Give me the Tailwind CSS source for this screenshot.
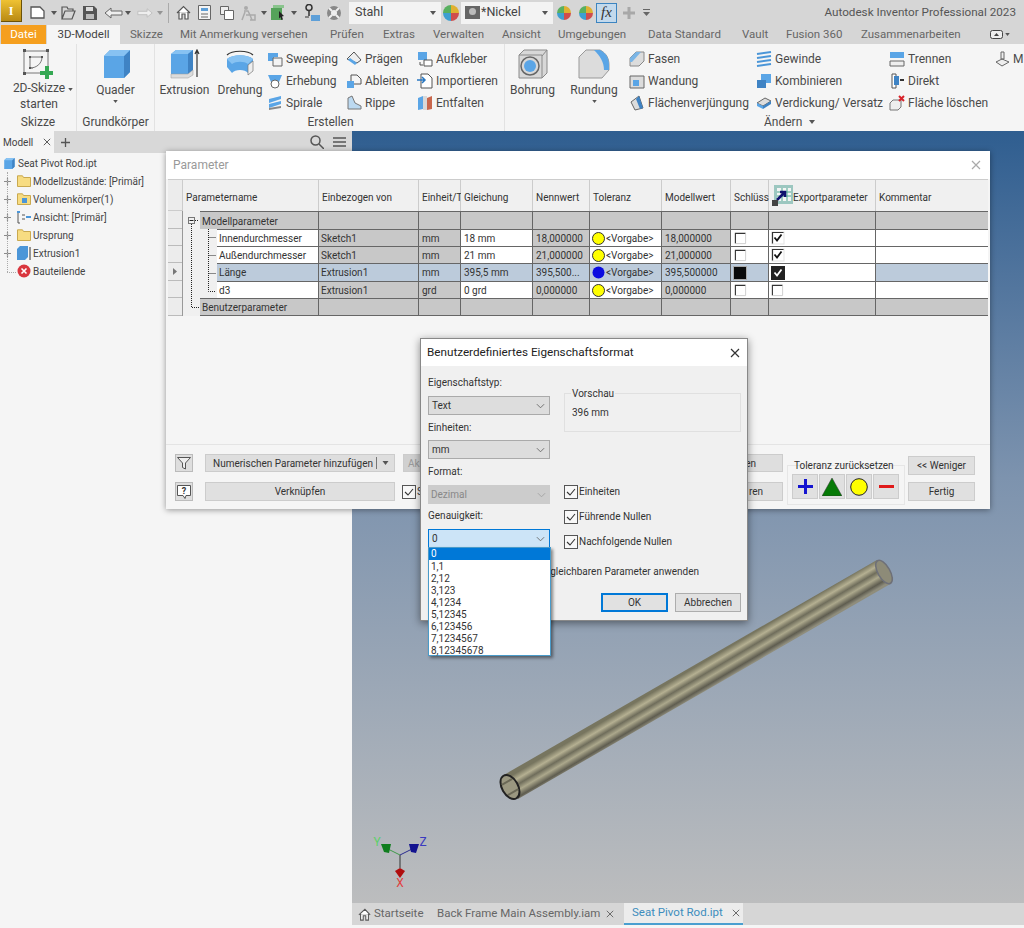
<!DOCTYPE html>
<html lang="de">
<head>
<meta charset="utf-8">
<title>Autodesk Inventor Professional 2023</title>
<script src="https://cdn.jsdelivr.net/npm/@tailwindcss/browser@4"></script>
</head>
<body class="m-0">
<svg class="hidden" width="0" height="0">
  <defs>
    <symbol id="cube" viewBox="0 0 30 30"><path d="M3 7 9 1h20v22l-6 6H3z" fill="#5aa5e6"/><path d="M23 7 29 1v22l-6 6z" fill="#3f83c4"/><path d="M3 7 9 1h20l-6 6z" fill="#87c2f2"/></symbol>
    <symbol id="folder" viewBox="0 0 14 12"><path d="M.5 11.5V.8h5l1 1.7h7v9z" fill="#f7dc82" stroke="#c9a94f"/></symbol>
    <symbol id="plus" viewBox="0 0 7 7"><path d="M3.500 0v7M0 3.500h7" stroke="#8a8a8a" stroke-width="1.200"/></symbol>
    <symbol id="chev" viewBox="0 0 10 6"><path d="M1 1l4 4 4-4" fill="none" stroke="#666" stroke-width="1"/></symbol>
    <symbol id="caret" viewBox="0 0 6 4"><path d="M0 0h6L3 4z" fill="#555"/></symbol>
    <symbol id="wheel" viewBox="0 0 16 16"><path d="M8 8V0a8 8 0 0 1 8 8z" fill="#e0b030"/><path d="M8 8h8a8 8 0 0 1-8 8z" fill="#cf4d4d"/><path d="M8 8v8a8 8 0 0 1-8-8z" fill="#3d9fd0"/><path d="M8 8H0a8 8 0 0 1 8-8z" fill="#58b060"/></symbol>
    <symbol id="check" viewBox="0 0 14 14"><rect x=".5" y=".5" width="13" height="13" fill="#f8f8f8" stroke="#555"/><path d="M3 7l3 3 5-6" fill="none" stroke="#333" stroke-width="1.100"/></symbol>
    <symbol id="cbox" viewBox="0 0 14 14"><rect x="1.500" y="1.500" width="11" height="11" fill="#fff"/><path d="M1.500 12.500v-11h11" fill="none" stroke="#333" stroke-width="1.200"/><path d="M12.500 1.500v11h-11" fill="none" stroke="#ccc"/></symbol>
    <symbol id="cboxc" viewBox="0 0 14 14"><rect x=".5" y=".5" width="13" height="13" fill="#e3e3e3"/><rect x="1.500" y="1.500" width="11" height="11" fill="#fff"/><path d="M1.500 12.500v-11h11" fill="none" stroke="#333" stroke-width="1.200"/><path d="M3.500 6.500l2.500 3 4.500-6" fill="none" stroke="#111" stroke-width="1.800"/></symbol>
    <symbol id="x" viewBox="0 0 10 10"><path d="M1 1l8 8M9 1l-8 8" stroke="currentColor" stroke-width="1.200"/></symbol>
  </defs>
</svg>

<div class="relative w-[1024px] h-[928px] overflow-hidden flex flex-col bg-[#f5f5f5] text-[#444] text-[12px] font-['Roboto',sans-serif]">

  <!-- Quick access bar -->
  <div class="h-[25px] shrink-0 bg-[#d6d6d6] flex items-center relative">
    <div class="w-[21px] h-[22px] ml-px -mt-[3px] bg-gradient-to-b from-[#efc233] to-[#b98a12] flex items-center justify-center text-white text-[12px] font-bold font-['Liberation_Serif',serif] border-r border-b border-[#6b5208]">I</div>
    <svg class="ml-[8px] w-[15px] h-[15px]" viewBox="0 0 15 15"><path d="M1 2h9l4 4v7H1z" fill="#fff" stroke="#555" stroke-width="1.300"/></svg>
    <svg class="ml-[6px] w-[6px] h-[4px]"><use href="#caret"/></svg>
    <svg class="ml-[4px] w-[15px] h-[14px]" viewBox="0 0 15 14"><path d="M1 13V1h5l1 2h5v2M1 13l3-8h10l-3 8z" fill="none" stroke="#555" stroke-width="1.200"/></svg>
    <svg class="ml-[7px] w-[14px] h-[14px]" viewBox="0 0 14 14"><path d="M0 0h11l3 3v11H0z" fill="#555"/><path d="M3 1h7v4H3z" fill="#ddd"/><path d="M3 8h8v5H3z" fill="#bbb"/></svg>
    <svg class="ml-[7px] w-[19px] h-[12px]" viewBox="0 0 19 12"><path d="M1 6l6-5v3h11v4H7v3z" fill="#eee" stroke="#666"/></svg>
    <svg class="ml-[2px] w-[6px] h-[4px]"><use href="#caret"/></svg>
    <svg class="ml-[6px] w-[16px] h-[12px]" viewBox="0 0 19 12"><path d="M18 6l-6-5v3H1v4h11v3z" fill="#eee" stroke="#bbb"/></svg>
    <svg class="ml-[4px] w-[6px] h-[4px] opacity-50"><use href="#caret"/></svg>
    <div class="ml-[5px] w-px h-[20px] bg-[#aaa]"></div>
    <svg class="ml-[7px] w-[15px] h-[15px]" viewBox="0 0 15 15"><path d="M1 8l6.500-6.500L14 8M3 7v7h3V9h3v5h3V7" fill="#fff" stroke="#555" stroke-width="1.200"/></svg>
    <svg class="ml-[7px] w-[13px] h-[15px]" viewBox="0 0 13 15"><path d="M.5.500h12v14H.5z" fill="#f4f4f4" stroke="#666"/><path d="M3 3h7v3H3z" fill="#5d9fd8"/><path d="M3 9h7M3 12h7" stroke="#666"/></svg>
    <svg class="ml-[9px] w-[14px] h-[14px]" viewBox="0 0 14 14"><path d="M.5.500h8v8h-8z" fill="#eee" stroke="#666"/><path d="M4.500 4.500h9v9h-9z" fill="#fff" stroke="#666"/></svg>
    <svg class="ml-[7px] w-[15px] h-[16px]" viewBox="0 0 15 16"><circle cx="5" cy="3" r="2" fill="#aaa"/><path d="M3 6h4l2 4 2 5M4 7L1 15M5 10h9v5H9" fill="none" stroke="#aaa" stroke-width="1.500"/></svg>
    <svg class="ml-[5px] w-[6px] h-[4px]"><use href="#caret"/></svg>
    <svg class="ml-[4px] w-[15px] h-[15px]" viewBox="0 0 15 15"><path d="M0 3h11v12H0z" fill="#55a35a"/><path d="M2 0h11v3H2z" fill="#8ac48d"/><path d="M8 6l5 5-2 .5 1 3-1.500.5-1-3-1.500 1.500z" fill="#222"/></svg>
    <svg class="ml-[5px] w-[6px] h-[4px]"><use href="#caret"/></svg>
    <svg class="ml-[7px] w-[17px] h-[18px]" viewBox="0 0 17 18"><circle cx="5" cy="3.500" r="3" fill="none" stroke="#333" stroke-width="1.500"/><path d="M5 7v5" stroke="#333" stroke-width="1.500"/><path d="M7 11h9v6H7z" fill="#5d9fd8"/><path d="M1 13h4" stroke="#333"/></svg>
    <svg class="ml-[5px] w-[16px] h-[16px]" viewBox="0 0 16 16"><circle cx="8" cy="8" r="7" fill="#888"/><circle cx="8" cy="8" r="3" fill="#eee"/><path d="M3 3l3 3M13 3l-3 3M3 13l3-3M13 13l-3-3" stroke="#eee" stroke-width="2"/></svg>
    <div class="ml-[7px] w-[92px] h-[22px] bg-[#f3f3f3] flex items-center justify-between pl-[6px] pr-[5px] text-[12.500px]">Stahl<svg class="w-[6px] h-[4px]"><use href="#caret"/></svg></div>
    <svg class="ml-[2px] w-[16px] h-[16px]"><use href="#wheel"/></svg>
    <div class="ml-[2px] w-[92px] h-[22px] bg-[#f3f3f3] flex items-center pl-[4px] pr-[5px] text-[12.500px]"><svg class="w-[15px] h-[13px] mr-px shrink-0" viewBox="0 0 15 13"><rect width="15" height="13" fill="#666"/><circle cx="7.500" cy="5.500" r="3.500" fill="#bbb"/></svg><span class="flex-1">*Nickel</span><svg class="w-[6px] h-[4px]"><use href="#caret"/></svg></div>
    <svg class="ml-[4px] w-[14px] h-[14px]"><use href="#wheel"/></svg>
    <svg class="ml-[8px] w-[14px] h-[14px]"><use href="#wheel"/></svg>
    <div class="ml-[3px] w-[21px] h-[20px] bg-[#c3d9ec] border border-[#3c84c0] flex items-center justify-center text-[15px] italic text-[#333] font-['Liberation_Serif',serif]">fx</div>
    <svg class="ml-[6px] w-[12px] h-[12px]" viewBox="0 0 12 12"><path d="M6 0v12M0 6h12" stroke="#a8a8a8" stroke-width="3"/></svg>
    <svg class="ml-[8px] w-[7px] h-[7px]" viewBox="0 0 7 7"><path d="M0 0h7v1H0zM0 3h7L3.500 7z" fill="#666"/></svg>
    <div class="ml-auto mr-[8px] text-[11.700px] text-[#555]">Autodesk Inventor Professional 2023</div>
  </div>

  <!-- Ribbon tabs -->
  <div class="h-[19px] shrink-0 bg-[#d6d6d6] flex items-center text-[11.500px] text-[#666]">
    <div class="ml-px w-[45px] h-full bg-[#f59f1e] text-[#fff] flex items-center justify-center">Datei</div>
    <div class="ml-px w-[73px] h-full bg-[#f5f5f5] text-[#444] flex items-center justify-center">3D-Modell</div>
    <div class="ml-[10px] w-[50px]">Skizze</div>
    <div class="w-[150px]">Mit Anmerkung versehen</div>
    <div class="w-[53px]">Prüfen</div>
    <div class="w-[50px]">Extras</div>
    <div class="w-[69px]">Verwalten</div>
    <div class="w-[56px]">Ansicht</div>
    <div class="w-[90px]">Umgebungen</div>
    <div class="w-[94px]">Data Standard</div>
    <div class="w-[44px]">Vault</div>
    <div class="w-[75px]">Fusion 360</div>
    <div class="w-[129px]">Zusammenarbeiten</div>
    <svg class="w-[13px] h-[9px]" viewBox="0 0 13 9"><rect x=".5" y=".5" width="12" height="8" rx="2" fill="#eee" stroke="#444"/><path d="M4 6l2.500-3L9 6z" fill="#444"/></svg>
    <svg class="ml-[2px] w-[5px] h-[3px]"><use href="#caret"/></svg>
  </div>

  <!-- Ribbon -->
  <div class="h-[87px] shrink-0 bg-[#f5f5f5] flex text-[12px] text-[#4a4a4a]">
    <div class="w-[77px] shrink-0 border-r border-[#e2e2e2] flex flex-col">
      <div class="h-[70px] flex flex-col items-center pt-[5px]">
        <svg class="w-[30px] h-[30px] shrink-0" viewBox="0 0 30 30"><path d="M1 2h24v22H1z" fill="none" stroke="#777"/><path d="M7 8h12M7 8v11h3M7 19c7 0 12-5 12-11" fill="none" stroke="#777"/><path d="M0 0h3v3H0zM23 0h3v3h-3zM0 23h3v3H0zM6 7h2v2H6zM18 7h2v2h-2zM6 18h2v2H6z" fill="#555"/><path d="M22 17h4v5h5v4h-5v4h-4v-4h-5v-4h5z" fill="#35a853"/></svg>
        <div class="leading-[16px] mt-[1px] text-center relative pl-[2px]">2D-Skizze<br>starten<svg class="absolute -right-[8px] top-[8px] w-[5px] h-[3px]"><use href="#caret"/></svg></div>
      </div>
      <div class="h-[16px] text-center leading-[16px]">Skizze</div>
    </div>
    <div class="w-[78px] shrink-0 border-r border-[#e2e2e2] flex flex-col">
      <div class="h-[70px] flex flex-col items-center pt-[5px]">
        <svg class="w-[30px] h-[30px] shrink-0"><use href="#cube"/></svg>
        <div class="mt-[3px] leading-[16px]">Quader</div>
        <svg class="mt-[2px] w-[5px] h-[3px]"><use href="#caret"/></svg>
      </div>
      <div class="h-[16px] text-center leading-[16px]">Grundkörper</div>
    </div>
    <div class="w-[350px] shrink-0 border-r border-[#e2e2e2] flex flex-col">
      <div class="h-[70px] flex">
        <div class="w-[59px] flex flex-col items-center pt-[5px]">
          <svg class="w-[30px] h-[30px] shrink-0" viewBox="0 0 30 30"><path d="M1 5l5-4h17v20l-5 4H1z" fill="#5aa5e6"/><path d="M1 5l5-4h17l-5 4z" fill="#87c2f2"/><path d="M18 5l5-4v20l-5 4z" fill="#3f83c4"/><path d="M1 25h17l5-4v5l-5 3H1z" fill="#dcdcdc" stroke="#999" stroke-width=".5"/><path d="M27 28V2M25 5l2-4 2 4" fill="none" stroke="#333" stroke-width="1.200"/></svg>
          <div class="mt-[3px] leading-[16px]">Extrusion</div>
        </div>
        <div class="w-[52px] flex flex-col items-center pt-[5px]">
          <svg class="w-[32px] h-[30px] shrink-0" viewBox="0 0 32 30"><path d="M3 6C8 1 24 1 29 6" fill="none" stroke="#333" stroke-width="1.200"/><path d="M3 10c6-5 20-5 26 0v8l-5 6c-3-4-13-4-16 0l-5-6z" fill="#5aa5e6"/><path d="M3 10c6-5 20-5 26 0l-5 5c-4-3-12-3-16 0z" fill="#87c2f2"/><path d="M24 16l5-4v10l-5 4z" fill="#eee" stroke="#777" stroke-width=".7"/></svg>
          <div class="mt-[3px] leading-[16px]">Drehung</div>
        </div>
        <div class="w-[79px] flex flex-col pt-[4px]">
          <div class="h-[22px] flex items-center pl-px"><svg class="w-[16px] h-[16px] mr-[3px]" viewBox="0 0 16 16"><path d="M1 2h10v4H7v4H1z" fill="#5aa5e6"/><path d="M6 7h9v8H6z" fill="#f4f4f4" stroke="#666"/></svg>Sweeping</div>
          <div class="h-[22px] flex items-center pl-px"><svg class="w-[16px] h-[16px] mr-[3px]" viewBox="0 0 16 16"><path d="M1 2h14l-3 7H4z" fill="#5aa5e6"/><circle cx="8" cy="11" r="4" fill="#fff" stroke="#666"/></svg>Erhebung</div>
          <div class="h-[22px] flex items-center pl-px"><svg class="w-[16px] h-[16px] mr-[3px]" viewBox="0 0 16 16"><path d="M2 4l12-3v3L2 8zM2 9l12-3v3L2 13z" fill="#5aa5e6"/><path d="M2 13l12-2v2L2 15z" fill="#888"/></svg>Spirale</div>
        </div>
        <div class="w-[71px] flex flex-col pt-[4px]">
          <div class="h-[22px] flex items-center pl-px"><svg class="w-[16px] h-[16px] mr-[3px]" viewBox="0 0 16 16"><path d="M1 8l7-7 7 8-4 3z" fill="#eee" stroke="#555"/><path d="M2 9l7 5 2-2-7-5z" fill="#5aa5e6"/></svg>Prägen</div>
          <div class="h-[22px] flex items-center pl-px"><svg class="w-[16px] h-[16px] mr-[3px]" viewBox="0 0 16 16"><path d="M1 8h7v7H1z" fill="#5aa5e6"/><path d="M5 8V2h6l4 4v5H8" fill="none" stroke="#555"/></svg>Ableiten</div>
          <div class="h-[22px] flex items-center pl-px"><svg class="w-[16px] h-[16px] mr-[3px]" viewBox="0 0 16 16"><path d="M2 14V3l4-2 3 7 6 3v3z" fill="#bcd9f0" stroke="#777"/></svg>Rippe</div>
        </div>
        <div class="w-[88px] flex flex-col pt-[4px]">
          <div class="h-[22px] flex items-center pl-px"><svg class="w-[16px] h-[16px] mr-[3px]" viewBox="0 0 16 16"><path d="M1 1h9v8H1z" fill="#5aa5e6"/><path d="M7 9h8v6H7z" fill="#fff" stroke="#555"/><path d="M3 11v3h3" fill="none" stroke="#555"/></svg>Aufkleber</div>
          <div class="h-[22px] flex items-center pl-px"><svg class="w-[16px] h-[16px] mr-[3px]" viewBox="0 0 16 16"><path d="M4 1h7l4 4v10H4z" fill="#fff" stroke="#555"/><path d="M0 7h7M5 4l3 3-3 3" fill="none" stroke="#2a78c2" stroke-width="1.500"/></svg>Importieren</div>
          <div class="h-[22px] flex items-center pl-px"><svg class="w-[16px] h-[16px] mr-[3px]" viewBox="0 0 16 16"><path d="M1 3l5-2v13l-5 1z" fill="#5aa5e6"/><path d="M6 1h4v14H6z" fill="#d9d9d9"/><path d="M10 3l5-2v13l-5 1z" fill="#c8674d"/></svg>Entfalten</div>
        </div>
      </div>
      <div class="h-[16px] text-center leading-[16px] pl-[2px]">Erstellen</div>
    </div>
    <div class="flex-1 flex flex-col min-w-0">
      <div class="h-[70px] flex">
        <div class="w-[55px] flex flex-col items-center pt-[5px]">
          <svg class="w-[30px] h-[30px] shrink-0" viewBox="0 0 30 30"><path d="M1 6l5-5h23v23l-5 5H1z" fill="#d8d8d8" stroke="#8a8a8a"/><path d="M24 7l5-6M1 6h23v23" fill="none" stroke="#8a8a8a"/><circle cx="12" cy="17" r="9" fill="#d8d8d8" stroke="#666" stroke-width="1.500"/><circle cx="12" cy="17" r="6" fill="#5aa5e6"/></svg>
          <div class="mt-[3px] leading-[16px]">Bohrung</div>
        </div>
        <div class="w-[68px] flex flex-col items-center pt-[5px]">
          <svg class="w-[32px] h-[30px] shrink-0" viewBox="0 0 32 30"><path d="M1 8l7-7h14c6 3 9 8 9 15v5l-7 8H1z" fill="#dcdcdc" stroke="#999"/><path d="M16 1h6c6 3 9 8 9 15v5h-5c0-8-4-14-10-20z" fill="#5aa5e6"/></svg>
          <div class="mt-[3px] leading-[16px]">Rundung</div>
          <svg class="mt-[2px] w-[5px] h-[3px]"><use href="#caret"/></svg>
        </div>
        <div class="w-[127px] flex flex-col pt-[4px]">
          <div class="h-[22px] flex items-center pl-px"><svg class="w-[16px] h-[16px] mr-[3px]" viewBox="0 0 16 16"><path d="M1 7l6-6h8v9l-5 5H1z" fill="#dcdcdc" stroke="#888"/><path d="M1 7l6-6h5L3 11H1z" fill="#7ab5e6"/></svg>Fasen</div>
          <div class="h-[22px] flex items-center pl-px"><svg class="w-[16px] h-[16px] mr-[3px]" viewBox="0 0 16 16"><path d="M1 3h14v12H1z" fill="#dcdcdc" stroke="#666"/><path d="M4 7h6v6H4z" fill="#5aa5e6"/></svg>Wandung</div>
          <div class="h-[22px] flex items-center pl-px"><svg class="w-[16px] h-[16px] mr-[3px]" viewBox="0 0 16 16"><path d="M2 7l8-6 4 12-8 2z" fill="#dcdcdc" stroke="#666"/><path d="M7 4l3-3 4 12-3 1z" fill="#3f83c4"/></svg>Flächenverjüngung</div>
        </div>
        <div class="w-[133px] flex flex-col pt-[4px]">
          <div class="h-[22px] flex items-center pl-px"><svg class="w-[16px] h-[16px] mr-[3px]" viewBox="0 0 16 16"><path d="M1 3l14-2M1 7l14-2M1 11l14-2M1 15l14-2" stroke="#4b96d8" stroke-width="2"/></svg>Gewinde</div>
          <div class="h-[22px] flex items-center pl-px"><svg class="w-[16px] h-[16px] mr-[3px]" viewBox="0 0 16 16"><path d="M5 1h10v9H5z" fill="#5aa5e6"/><path d="M1 7h9v8H1z" fill="#3f83c4"/></svg>Kombinieren</div>
          <div class="h-[22px] flex items-center pl-px"><svg class="w-[16px] h-[16px] mr-[3px]" viewBox="0 0 16 16"><path d="M1 8l8-5 6 3-8 5z" fill="#ddd" stroke="#666"/><path d="M1 8l6 3v3L1 11z" fill="#5aa5e6"/><path d="M7 11l8-5v3l-8 5z" fill="#3f83c4"/></svg>Verdickung/ Versatz</div>
        </div>
        <div class="w-[107px] flex flex-col pt-[4px]">
          <div class="h-[22px] flex items-center pl-px"><svg class="w-[16px] h-[16px] mr-[3px]" viewBox="0 0 16 16"><path d="M1 1h14v6H1z" fill="#5aa5e6"/><path d="M1 10h14v5H1z" fill="#eee" stroke="#666"/></svg>Trennen</div>
          <div class="h-[22px] flex items-center pl-px"><svg class="w-[16px] h-[16px] mr-[3px]" viewBox="0 0 16 16"><path d="M3 1h4v14H3z" fill="#fff" stroke="#555"/><path d="M5 3h5v9H5z" fill="#3f83c4"/><path d="M11 7h4" stroke="#333" stroke-width="2"/></svg>Direkt</div>
          <div class="h-[22px] flex items-center pl-px"><svg class="w-[16px] h-[16px] mr-[3px]" viewBox="0 0 16 16"><path d="M1 8l3-3h8v7l-3 3H1z" fill="#eee" stroke="#777"/><path d="M10 1l5 5M15 1l-5 5" stroke="#d8232a" stroke-width="2"/></svg>Fläche löschen</div>
        </div>
        <div class="flex-1 flex flex-col pt-[4px]">
          <div class="h-[22px] flex items-center whitespace-nowrap"><svg class="w-[15px] h-[16px] mr-[3px] shrink-0" viewBox="0 0 15 16"><path d="M6 1h3v7H6zM1 11l6-3 7 3-7 4z" fill="#eee" stroke="#666"/></svg>M</div>
        </div>
      </div>
      <div class="h-[16px] leading-[16px] pl-[259px] flex items-center gap-[7px]">Ändern<svg class="w-[6px] h-[4px]"><use href="#caret"/></svg></div>
    </div>
  </div>

  <!-- Main area -->
  <div class="flex-1 flex min-h-0">
    <aside class="w-[352px] shrink-0 bg-[#f5f5f5] flex flex-col text-[10px] text-[#444]">
      <div class="h-[22px] bg-[#d8d8d8] flex items-center relative shrink-0">
        <div class="w-[54px] h-full bg-[#f5f5f5] flex items-center pl-[3px] text-[10px]">Modell<svg class="ml-[10px] w-[8px] h-[8px] text-[#555]"><use href="#x"/></svg></div>
        <svg class="ml-[7px] w-[9px] h-[9px]" viewBox="0 0 9 9"><path d="M4.500 0v9M0 4.500h9" stroke="#555" stroke-width="1.300"/></svg>
        <svg class="ml-auto mr-[9px] w-[14px] h-[14px]" viewBox="0 0 14 14"><circle cx="5.500" cy="5.500" r="4.500" fill="none" stroke="#555" stroke-width="1.500"/><path d="M9 9l5 5" stroke="#555" stroke-width="1.500"/></svg>
        <svg class="mr-[6px] w-[13px] h-[10px]" viewBox="0 0 13 10"><path d="M0 1h13M0 5h13M0 9h13" stroke="#555" stroke-width="1.500"/></svg>
      </div>
      <div class="flex flex-col relative">
        <div class="h-[19px] pt-[1px] flex items-center pl-[3px]"><svg class="w-[12px] h-[13px] mr-[3px]"><use href="#cube"/></svg>Seat Pivot Rod.ipt</div>
        <div class="h-[18px] flex items-center pl-[4px]"><svg class="w-[7px] h-[7px] mr-[6px]"><use href="#plus"/></svg><svg class="w-[14px] h-[12px] mr-[2px]"><use href="#folder"/></svg>Modellzustände: [Primär]</div>
        <div class="h-[18px] flex items-center pl-[4px]"><svg class="w-[7px] h-[7px] mr-[6px]"><use href="#plus"/></svg><svg class="w-[14px] h-[12px] mr-[2px]" viewBox="0 0 14 12"><path d="M.5 11.500V.8h5l1 1.700h7v9z" fill="#f7dc82" stroke="#c9a94f"/><path d="M5 5h5v5H5z" fill="#4b96d8"/></svg>Volumenkörper(1)</div>
        <div class="h-[18px] flex items-center pl-[4px]"><svg class="w-[7px] h-[7px] mr-[6px]"><use href="#plus"/></svg><svg class="w-[14px] h-[13px] mr-[2px]" viewBox="0 0 14 13"><path d="M3 1H1v11h2" fill="none" stroke="#555"/><path d="M0 0h3v2H0z" fill="#4b96d8"/><path d="M5 4h3M5 8h3" stroke="#555"/><path d="M9 5h5v2H9z" fill="#4b96d8"/></svg>Ansicht: [Primär]</div>
        <div class="h-[18px] flex items-center pl-[4px]"><svg class="w-[7px] h-[7px] mr-[6px]"><use href="#plus"/></svg><svg class="w-[14px] h-[12px] mr-[2px]"><use href="#folder"/></svg>Ursprung</div>
        <div class="h-[18px] flex items-center pl-[4px]"><svg class="w-[7px] h-[7px] mr-[6px]"><use href="#plus"/></svg><svg class="w-[14px] h-[14px] mr-[2px]" viewBox="0 0 14 14"><path d="M0 3l3-3h8v11l-3 3H0z" fill="#4b96d8"/><path d="M13 14V1" stroke="#333"/></svg>Extrusion1</div>
        <div class="h-[18px] flex items-center pl-[17px]"><svg class="w-[14px] h-[14px] mr-[2px]" viewBox="0 0 14 14"><circle cx="7" cy="7" r="6.500" fill="#d9363e"/><path d="M4.500 4.500l5 5M9.500 4.500l-5 5" stroke="#fff" stroke-width="1.600"/></svg>Bauteilende</div>
        <div class="absolute left-[7px] top-[19px] h-[100px] border-l border-dotted border-[#aaa]"></div>
        <div class="absolute left-[7px] top-[119px] w-[9px] border-t border-dotted border-[#aaa]"></div>
      </div>
    </aside>
    <div class="flex-1 flex flex-col min-w-0">
      <div class="flex-1 bg-gradient-to-b from-[#2f5e90] via-[#7d93ae] via-45% to-[#bcbdbe]"></div>
      <div class="h-[22px] shrink-0 bg-[#d6d6d6] flex items-center text-[11.500px] text-[#666] whitespace-nowrap">
        <svg class="ml-[6px] w-[13px] h-[13px] mr-[3px]" viewBox="0 0 15 15"><path d="M1 8l7-6.500L14 8M3 7v7h3V9h3v5h3V7" fill="#fff" stroke="#555" stroke-width="1.200"/></svg>
        <span class="w-[63px]">Startseite</span>
        <span class="w-[169px]">Back Frame Main Assembly.iam</span>
        <svg class="w-[8px] h-[8px] text-[#666]"><use href="#x"/></svg>
        <div class="ml-[10px] h-full w-[119px] pl-[8px] bg-[#ececec] border-b-[2px] border-[#4a9fd0] flex items-center text-[#3d8dbd]">Seat Pivot Rod.ipt<svg class="ml-[9px] w-[8px] h-[8px] text-[#666]"><use href="#x"/></svg></div>
      </div>
      <div class="h-[3px] shrink-0 bg-[#f5f5f5]"></div>
    </div>
  </div>

  <!-- Tube and triad, free on the canvas -->
  <svg class="absolute left-0 top-0 pointer-events-none" width="1024" height="928" viewBox="0 0 1024 928">
    <defs>
      <linearGradient id="tube" gradientUnits="userSpaceOnUse" x1="697" y1="666" x2="710" y2="688">
        <stop offset="0" stop-color="#77755f"/><stop offset=".22" stop-color="#b5b092"/><stop offset=".42" stop-color="#6f6d5b"/><stop offset=".62" stop-color="#aca88c"/><stop offset=".85" stop-color="#5f5d50"/><stop offset="1" stop-color="#8f8d7c"/>
      </linearGradient>
    </defs>
    <path d="M502 776 877 560 892 583 518 799z" fill="url(#tube)"/>
    <g transform="rotate(-30 884 572)"><ellipse cx="884" cy="572" rx="6" ry="13" fill="#8d8b78" stroke="#6e7078" stroke-width="1.500"/></g>
    <g transform="rotate(-30 510 787)"><ellipse cx="510" cy="787" rx="8" ry="13" fill="#9a9780" stroke="#222" stroke-width="2"/><path d="M504 781l12 0M504 793l12 0" stroke="#6a6856" stroke-width="2"/></g>
    <path d="M400 855V868" stroke="#333" stroke-width="1"/>
    <path d="M400 855 388 849" stroke="#3f9a4a" stroke-width="1"/>
    <path d="M400 855 412 849" stroke="#2b2b8f" stroke-width="1"/>
    <path d="M395 871l5-3 5 3-5 7z" fill="#b00d0d"/>
    <path d="M381 844l10 0-2 9-5-1z" fill="#0f7d1e"/>
    <path d="M409 844l10 0-3 9-5-1z" fill="#12128f"/>
    <text x="377" y="846" text-anchor="middle" font-family="Roboto" font-size="12" fill="#5ed06a">Y</text>
    <text x="423" y="846" text-anchor="middle" font-family="Roboto" font-size="12" fill="#3a3ac0">Z</text>
    <text x="400" y="887" text-anchor="middle" font-family="Roboto" font-size="12" fill="#e04040">X</text>
  </svg>

  <!-- Parameter dialog -->
  <div class="absolute left-[166px] top-[151px] w-[824px] h-[358px] bg-[#f5f5f5] shadow-[0_1px_6px_rgba(0,0,0,.4)] flex flex-col text-[10px] text-[#333]">
    <div class="h-[28px] shrink-0 bg-white flex items-center justify-between pl-[7px] pr-[9px] text-[12px] text-[#999]">
      <span>Parameter</span>
      <svg class="w-[10px] h-[10px] text-[#aaa]"><use href="#x"/></svg>
    </div>
    <div class="ml-[2px] w-[820px] grid grid-cols-[14px_137px_100px_42px_72px_57px_72px_69px_38px_107px_112px] grid-rows-[32px_18px_17px_17px_18px_17px_18px] relative">
      <div class="bg-[#ececec] border-t border-[#ccc] border-b border-[#bbb]"></div>
      <div class="bg-[#f0f0f0] border-t border-[#ccc] border-l border-r border-[#999] flex items-center pl-[3px] pt-[3px]">Parametername</div>
      <div class="bg-[#f0f0f0] border-t border-[#ccc] border-r border-[#999] flex items-center pl-[3px] pt-[3px]">Einbezogen von</div>
      <div class="bg-[#f0f0f0] border-t border-[#ccc] border-r border-[#999] flex items-center pl-[3px] pt-[3px] whitespace-nowrap">Einheit/T</div>
      <div class="bg-[#f0f0f0] border-t border-[#ccc] border-r border-[#999] flex items-center pl-[3px] pt-[3px]">Gleichung</div>
      <div class="bg-[#f0f0f0] border-t border-[#ccc] border-r border-[#999] flex items-center pl-[3px] pt-[3px]">Nennwert</div>
      <div class="bg-[#f0f0f0] border-t border-[#ccc] border-r border-[#999] flex items-center pl-[3px] pt-[3px]">Toleranz</div>
      <div class="bg-[#f0f0f0] border-t border-[#ccc] border-r border-[#999] flex items-center pl-[3px] pt-[3px]">Modellwert</div>
      <div class="bg-[#f0f0f0] border-t border-[#ccc] border-r border-[#999] flex items-center pl-[3px] pt-[3px] whitespace-nowrap">Schlüss</div>
      <div class="bg-[#f0f0f0] border-t border-[#ccc] border-r border-[#999] flex items-center pl-[3px]"><svg class="w-[21px] h-[21px] shrink-0" viewBox="0 0 21 21"><path d="M2 0h19v19H2z" fill="#9cc7c0"/><path d="M5 3h14v13H5z" fill="#f4f4f4"/><path d="M5 7h14M5 11h14M10 3v13M15 3v13" stroke="#4aa890"/><path d="M5 15l7-7M8 7h5v5" fill="none" stroke="#10106e" stroke-width="2.500"/><path d="M0 15h6v6H0z" fill="#444"/></svg><span class="whitespace-nowrap pt-[3px]">Exportparameter</span></div>
      <div class="bg-[#f0f0f0] border-t border-[#ccc] flex items-center pl-[3px] pt-[3px]">Kommentar</div>

      <div class="bg-[#ececec] border-b border-[#bbb]"></div>
      <div class="bg-[#f0f0f0] border-l border-[#999] pl-[17px]"><div class="h-full bg-[#c8c8c8] border-t border-[#666] border-r border-r-[#666] flex items-center pl-[2px] pt-px">Modellparameter</div></div>
      <div class="bg-[#c8c8c8] border-t border-[#666] border-r border-[#666]"></div>
      <div class="bg-[#c8c8c8] border-t border-[#666] border-r border-[#666]"></div>
      <div class="bg-[#c8c8c8] border-t border-[#666] border-r border-[#666]"></div>
      <div class="bg-[#c8c8c8] border-t border-[#666] border-r border-[#666]"></div>
      <div class="bg-[#c8c8c8] border-t border-[#666] border-r border-[#666]"></div>
      <div class="bg-[#c8c8c8] border-t border-[#666] border-r border-[#666]"></div>
      <div class="bg-[#c8c8c8] border-t border-[#666] border-r border-[#666]"></div>
      <div class="bg-[#c8c8c8] border-t border-[#666] border-r border-[#666]"></div>
      <div class="bg-[#c8c8c8] border-t border-[#666]"></div>

      <div class="bg-[#ececec] border-b border-[#bbb]"></div>
      <div class="bg-[#f0f0f0] border-l border-[#999] pl-[34px]"><div class="h-full bg-white border-t border-[#666] border-r border-r-[#666] flex items-center pl-[2px]">Innendurchmesser</div></div>
      <div class="bg-[#c8c8c8] border-t border-r border-[#666] flex items-center pl-[2px]">Sketch1</div>
      <div class="bg-[#c8c8c8] border-t border-r border-[#666] flex items-center pl-[3px]">mm</div>
      <div class="bg-white border-t border-r border-[#666] flex items-center pl-[3px]">18 mm</div>
      <div class="bg-[#c8c8c8] border-t border-r border-[#666] flex items-center pl-[3px]">18,000000</div>
      <div class="bg-white border-t border-r border-[#666] flex items-center pl-[2px]"><svg class="w-[13px] h-[13px] mr-[1px]" viewBox="0 0 13 13"><circle cx="6.500" cy="6.500" r="6" fill="#ff0" stroke="#333"/></svg>&lt;Vorgabe&gt;</div>
      <div class="bg-[#c8c8c8] border-t border-r border-[#666] flex items-center pl-[3px]">18,000000</div>
      <div class="bg-white border-t border-r border-[#666] flex items-center pl-[3px]"><svg class="w-[13px] h-[13px]"><use href="#cbox"/></svg></div>
      <div class="bg-white border-t border-r border-[#666] flex items-center pl-[2px]"><svg class="w-[14px] h-[14px]"><use href="#cboxc"/></svg></div>
      <div class="bg-white border-t border-[#666]"></div>

      <div class="bg-[#ececec] border-b border-[#bbb]"></div>
      <div class="bg-[#f0f0f0] border-l border-[#999] pl-[34px]"><div class="h-full bg-white border-t border-[#666] border-r border-r-[#666] flex items-center pl-[2px]">Außendurchmesser</div></div>
      <div class="bg-[#c8c8c8] border-t border-r border-[#666] flex items-center pl-[2px]">Sketch1</div>
      <div class="bg-[#c8c8c8] border-t border-r border-[#666] flex items-center pl-[3px]">mm</div>
      <div class="bg-white border-t border-r border-[#666] flex items-center pl-[3px]">21 mm</div>
      <div class="bg-[#c8c8c8] border-t border-r border-[#666] flex items-center pl-[3px]">21,000000</div>
      <div class="bg-white border-t border-r border-[#666] flex items-center pl-[2px]"><svg class="w-[13px] h-[13px] mr-[1px]" viewBox="0 0 13 13"><circle cx="6.500" cy="6.500" r="6" fill="#ff0" stroke="#333"/></svg>&lt;Vorgabe&gt;</div>
      <div class="bg-[#c8c8c8] border-t border-r border-[#666] flex items-center pl-[3px]">21,000000</div>
      <div class="bg-white border-t border-r border-[#666] flex items-center pl-[3px]"><svg class="w-[13px] h-[13px]"><use href="#cbox"/></svg></div>
      <div class="bg-white border-t border-r border-[#666] flex items-center pl-[2px]"><svg class="w-[14px] h-[14px]"><use href="#cboxc"/></svg></div>
      <div class="bg-white border-t border-[#666]"></div>

      <div class="bg-[#ececec] border-b border-[#bbb] flex items-center pl-[5px]"><svg class="w-[4px] h-[7px]" viewBox="0 0 4 7"><path d="M0 0l4 3.500L0 7z" fill="#777"/></svg></div>
      <div class="bg-[#f0f0f0] border-l border-[#999] pl-[34px]"><div class="h-full bg-[#bccbdb] border-t border-[#666] border-r border-r-[#666] flex items-center pl-[2px]">Länge</div></div>
      <div class="bg-[#bccbdb] border-t border-r border-[#666] flex items-center pl-[2px]">Extrusion1</div>
      <div class="bg-[#bccbdb] border-t border-r border-[#666] flex items-center pl-[3px]">mm</div>
      <div class="bg-[#bccbdb] border-t border-r border-[#666] flex items-center pl-[3px]">395,5 mm</div>
      <div class="bg-[#bccbdb] border-t border-r border-[#666] flex items-center pl-[3px]">395,500...</div>
      <div class="bg-[#bccbdb] border-t border-r border-[#666] flex items-center pl-[2px]"><svg class="w-[13px] h-[13px] mr-[1px]" viewBox="0 0 13 13"><circle cx="6.500" cy="6.500" r="6" fill="#0b0be0"/></svg>&lt;Vorgabe&gt;</div>
      <div class="bg-[#bccbdb] border-t border-r border-[#666] flex items-center pl-[3px]">395,500000</div>
      <div class="bg-[#bccbdb] border-t border-r border-[#666] flex items-center pl-[2px]"><div class="w-[14px] h-[14px] bg-[#0a0a0a] border border-[#aaa]"></div></div>
      <div class="bg-white border-t border-r border-[#666] flex items-center pl-[2px]"><svg class="w-[14px] h-[14px]" viewBox="0 0 14 14"><rect width="14" height="14" fill="#222"/><path d="M3.500 6.500l2.500 3 4.500-6" fill="none" stroke="#fff" stroke-width="1.800"/></svg></div>
      <div class="bg-[#bccbdb] border-t border-[#666]"></div>

      <div class="bg-[#ececec] border-b border-[#bbb]"></div>
      <div class="bg-[#f0f0f0] border-l border-[#999] pl-[34px]"><div class="h-full bg-white border-t border-[#666] border-r border-r-[#666] flex items-center pl-[2px]">d3</div></div>
      <div class="bg-[#c8c8c8] border-t border-r border-[#666] flex items-center pl-[2px]">Extrusion1</div>
      <div class="bg-[#c8c8c8] border-t border-r border-[#666] flex items-center pl-[3px]">grd</div>
      <div class="bg-white border-t border-r border-[#666] flex items-center pl-[3px]">0 grd</div>
      <div class="bg-[#c8c8c8] border-t border-r border-[#666] flex items-center pl-[3px]">0,000000</div>
      <div class="bg-white border-t border-r border-[#666] flex items-center pl-[2px]"><svg class="w-[13px] h-[13px] mr-[1px]" viewBox="0 0 13 13"><circle cx="6.500" cy="6.500" r="6" fill="#ff0" stroke="#333"/></svg>&lt;Vorgabe&gt;</div>
      <div class="bg-[#c8c8c8] border-t border-r border-[#666] flex items-center pl-[3px]">0,000000</div>
      <div class="bg-white border-t border-r border-[#666] flex items-center pl-[3px]"><svg class="w-[13px] h-[13px]"><use href="#cbox"/></svg></div>
      <div class="bg-white border-t border-r border-[#666] flex items-center pl-[2px]"><svg class="w-[13px] h-[13px]"><use href="#cbox"/></svg></div>
      <div class="bg-white border-t border-[#666]"></div>

      <div class="bg-[#ececec] border-b border-[#bbb]"></div>
      <div class="bg-[#f0f0f0] border-l border-[#999] pl-[17px]"><div class="h-full bg-[#c8c8c8] border-t border-b border-[#666] border-r border-r-[#666] flex items-center pl-[2px] pt-px">Benutzerparameter</div></div>
      <div class="bg-[#c8c8c8] border-t border-b border-r border-[#666]"></div>
      <div class="bg-[#c8c8c8] border-t border-b border-r border-[#666]"></div>
      <div class="bg-[#c8c8c8] border-t border-b border-r border-[#666]"></div>
      <div class="bg-[#c8c8c8] border-t border-b border-r border-[#666]"></div>
      <div class="bg-[#c8c8c8] border-t border-b border-r border-[#666]"></div>
      <div class="bg-[#c8c8c8] border-t border-b border-r border-[#666]"></div>
      <div class="bg-[#c8c8c8] border-t border-b border-r border-[#666]"></div>
      <div class="bg-[#c8c8c8] border-t border-b border-r border-[#666]"></div>
      <div class="bg-[#c8c8c8] border-t border-b border-[#666]"></div>

      <svg class="absolute left-0 top-0 pointer-events-none" width="60" height="136" viewBox="0 0 60 136">
        <rect x="20.500" y="38.500" width="6" height="6" fill="#f0f0f0" stroke="#777"/>
        <path d="M21.500 41.500h4" stroke="#222"/>
        <path d="M23.500 45v83.500H31M27 41.500h4M40.500 50v62.500h7M40.500 58.500h7M40.500 76.500h7M40.500 94.500h7" fill="none" stroke="#222" stroke-dasharray="1 1"/>
      </svg>
    </div>
    <div class="mt-auto h-[65px] border-t border-[#e4e4e4] flex pl-[9px] pr-[15px] pt-[9px] shrink-0">
      <div class="flex flex-col gap-[10px] w-[18px] mr-[12px]">
        <div class="h-[18px] bg-[#dedede] border border-[#bbb] flex items-center justify-center"><svg class="w-[14px] h-[13px]" viewBox="0 0 14 13"><path d="M.5.500h13L8.500 6v6l-3-1.500V6z" fill="#eee" stroke="#555"/></svg></div>
        <div class="h-[19px] bg-[#dedede] border border-[#bbb] flex items-center justify-center"><svg class="w-[14px] h-[14px]" viewBox="0 0 14 14"><path d="M.5.500h13v10H9l-1 3-2-3H.5z" fill="#fff" stroke="#555"/><text x="7" y="9" text-anchor="middle" font-size="9" font-weight="700" font-family="Roboto" fill="#333">?</text></svg></div>
      </div>
      <div class="flex flex-col gap-[10px] w-[190px] mr-[8px]">
        <div class="h-[18px] bg-[#dedede] border border-[#ccc] flex items-center pl-[7px]"><span class="flex-1 whitespace-nowrap">Numerischen Parameter hinzufügen</span><span class="w-px h-[12px] bg-[#777]"></span><svg class="mx-[5px] w-[7px] h-[4px]"><use href="#caret"/></svg></div>
        <div class="h-[19px] bg-[#e0e0e0] border border-[#ccc] flex items-center justify-center">Verknüpfen</div>
      </div>
      <div class="flex flex-col gap-[10px] w-[80px]">
        <div class="h-[18px] bg-[#d0d0d0] border border-[#ccc] flex items-center pl-[4px] text-[#999]">Ak</div>
        <div class="h-[19px] flex items-center whitespace-nowrap"><svg class="w-[14px] h-[14px] mr-[1px] -ml-px"><use href="#check"/></svg>S</div>
      </div>
      <div class="flex flex-col gap-[10px] w-[130px] ml-auto">
        <div class="h-[18px] bg-[#dedede] border border-[#ccc] flex items-center justify-end pr-[26px] whitespace-nowrap">en</div>
        <div class="h-[19px] bg-[#e0e0e0] border border-[#ccc] flex items-center justify-end pr-[19px] whitespace-nowrap">ren</div>
      </div>
      <div class="ml-[4px] w-[118px] h-[50px] flex flex-col relative">
        <div class="absolute left-0 top-[11px] w-full h-[40px] border border-[#e6e6e6]"></div>
        <div class="relative h-[14px] leading-[14px] pl-[7px] whitespace-nowrap mt-[5px] mb-[1px]">Toleranz zurücksetzen</div>
        <div class="relative flex gap-px pl-[5px]">
          <div class="w-[26px] h-[25px] bg-[#e0e0e0] border border-[#ccc] flex items-center justify-center"><svg class="w-[15px] h-[15px]" viewBox="0 0 15 15"><path d="M7.500 0v15M0 7.500h15" stroke="#1414d0" stroke-width="3"/></svg></div>
          <div class="w-[26px] h-[25px] bg-[#e0e0e0] border border-[#ccc] flex items-center justify-center"><svg class="w-[20px] h-[18px]" viewBox="0 0 20 18"><path d="M10 0l10 18H0z" fill="#067a06" stroke="#333" stroke-width=".5"/></svg></div>
          <div class="w-[26px] h-[25px] bg-[#e0e0e0] border border-[#ccc] flex items-center justify-center"><svg class="w-[18px] h-[18px]" viewBox="0 0 18 18"><circle cx="9" cy="9" r="8.300" fill="#ff0" stroke="#222"/></svg></div>
          <div class="w-[26px] h-[25px] bg-[#e0e0e0] border border-[#ccc] flex items-center justify-center"><div class="w-[15px] h-[3px] bg-[#e01a1a]"></div></div>
        </div>
      </div>
      <div class="flex flex-col gap-[7px] w-[67px] ml-[3px] -mt-px">
        <div class="h-[19px] mt-[3px] bg-[#e0e0e0] border border-[#ccc] flex items-center justify-center">&lt;&lt; Weniger</div>
        <div class="h-[19px] bg-[#e0e0e0] border border-[#ccc] flex items-center justify-center">Fertig</div>
      </div>
    </div>
  </div>

  <!-- Custom property format dialog -->
  <div class="absolute left-[420px] top-[338px] w-[328px] h-[283px] bg-[#f0f0f0] border border-[#888] shadow-[0_2px_8px_rgba(0,0,0,.45)] flex flex-col text-[10px] text-[#333]">
    <div class="h-[27px] shrink-0 bg-white flex items-center justify-between pl-[6px] pr-[7px] text-[11.700px] text-[#222]">
      <span>Benutzerdefiniertes Eigenschaftsformat</span>
      <svg class="w-[10px] h-[10px] text-[#333]"><use href="#x"/></svg>
    </div>
    <div class="flex pl-[7px] pr-[6px] pt-[10px] relative flex-1">
      <div class="w-[122px] flex flex-col">
        <div class="h-[20px] leading-[14px]">Eigenschaftstyp:</div>
        <div class="h-[19px] bg-[#dddddd] border border-[#aaa] flex items-center justify-between pl-[3px] pr-[4px]">Text<svg class="w-[9px] h-[6px]"><use href="#chev"/></svg></div>
        <div class="h-[25px] pt-[6px] leading-[14px]">Einheiten:</div>
        <div class="h-[19px] bg-[#dddddd] border border-[#aaa] flex items-center justify-between pl-[3px] pr-[4px]">mm<svg class="w-[9px] h-[6px]"><use href="#chev"/></svg></div>
        <div class="h-[26px] pt-[6px] leading-[14px]">Format:</div>
        <div class="h-[19px] bg-[#cccccc] flex items-center justify-between pl-[3px] pr-[4px] text-[#888]">Dezimal<svg class="w-[9px] h-[6px] opacity-40"><use href="#chev"/></svg></div>
        <div class="h-[25px] pt-[5px] leading-[14px]">Genauigkeit:</div>
        <div class="h-[19px] bg-[#cce4f7] border border-[#0078d7] flex items-center justify-between pl-[3px] pr-[4px]">0<svg class="w-[9px] h-[6px]"><use href="#chev"/></svg></div>
      </div>
      <div class="flex-1 ml-[14px] flex flex-col">
        <div class="mt-[17px] h-[39px] border border-[#e0e0e0] relative shrink-0">
          <span class="absolute left-[6px] -top-[7px] bg-[#f0f0f0] px-px leading-[14px]">Vorschau</span>
          <span class="absolute left-[7px] top-[12px] leading-[14px]">396 mm</span>
        </div>
        <div class="mt-[47px] h-[25px] flex items-center"><svg class="w-[14px] h-[14px] mr-px"><use href="#check"/></svg>Einheiten</div>
        <div class="h-[25px] flex items-center"><svg class="w-[14px] h-[14px] mr-px"><use href="#check"/></svg>Führende Nullen</div>
        <div class="h-[25px] flex items-center"><svg class="w-[14px] h-[14px] mr-px"><use href="#check"/></svg>Nachfolgende Nullen</div>
      </div>
      <div class="absolute right-[48px] top-[197px] flex items-center h-[16px] whitespace-nowrap">rgleichbaren Parameter anwenden</div>
      <div class="absolute right-[6px] bottom-[8px] flex gap-[7px]">
        <div class="w-[67px] h-[19px] bg-[#e1e1e1] border-2 border-[#0078d7] flex items-center justify-center">OK</div>
        <div class="w-[66px] h-[19px] bg-[#e1e1e1] border border-[#adadad] flex items-center justify-center">Abbrechen</div>
      </div>
    </div>
  </div>

  <!-- Open combo list -->
  <div class="absolute left-[428px] top-[547px] w-[123px] h-[109px] bg-white border border-[#4a9bc9] shadow-[2px_2px_3px_rgba(0,0,0,.45)] flex flex-col text-[10px] text-[#333] leading-[12px]">
    <div class="h-[13px] bg-[#0078d7] text-white pl-[2px]">0</div>
    <div class="h-[12px] pl-[2px] mt-[1px]">1,1</div>
    <div class="h-[12px] pl-[2px]">2,12</div>
    <div class="h-[12px] pl-[2px]">3,123</div>
    <div class="h-[12px] pl-[2px]">4,1234</div>
    <div class="h-[12px] pl-[2px]">5,12345</div>
    <div class="h-[12px] pl-[2px]">6,123456</div>
    <div class="h-[12px] pl-[2px]">7,1234567</div>
    <div class="h-[12px] pl-[2px]">8,12345678</div>
  </div>
</div>
</body>
</html>
